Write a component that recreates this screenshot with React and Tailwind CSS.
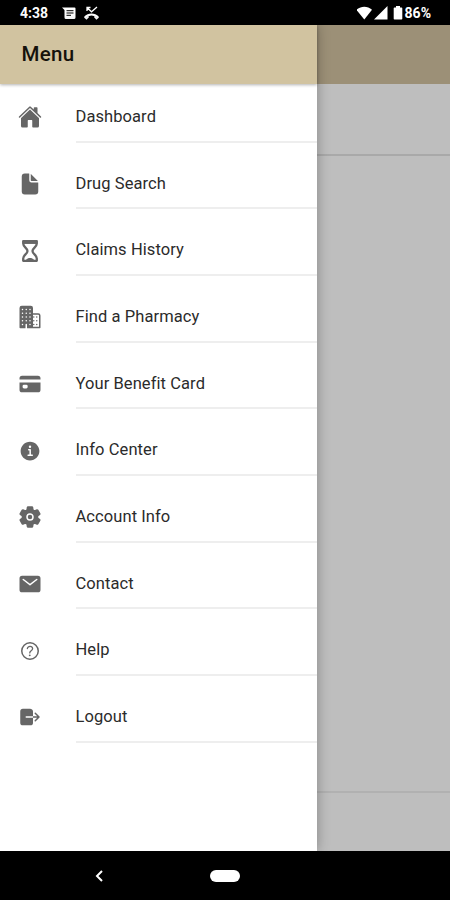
import {
  IoBusiness,
  IoCard,
  IoDocument,
  IoHelpCircleOutline,
  IoHome,
  IoInformationCircle,
  IoLogOut,
  IoMail,
  IoSettings,
} from "react-icons/io5";

function Hourglass({ className }) {
  return (
    <svg className={className} viewBox="0 0 24 24" fill="none" stroke="currentColor" strokeWidth="2.300" strokeLinejoin="round">
      <path d="M5.200 2.200h13.600v2.300c0 3.700-4.300 4.300-4.300 7.500s4.300 3.800 4.300 7.500v2.300H5.200v-2.300c0-3.700 4.300-4.300 4.300-7.500S5.200 8.200 5.200 4.500z" />
      <path d="M5.500 3.800h13" />
      <path d="M8 21c1-1.500 2.500-2 4-2s3 .5 4 2z" fill="currentColor" stroke="none" />
    </svg>
  );
}

const items = [
  { label: "Dashboard", icon: IoHome },
  { label: "Drug Search", icon: IoDocument },
  { label: "Claims History", icon: Hourglass },
  { label: "Find a Pharmacy", icon: IoBusiness },
  { label: "Your Benefit Card", icon: IoCard },
  { label: "Info Center", icon: IoInformationCircle },
  { label: "Account Info", icon: IoSettings },
  { label: "Contact", icon: IoMail },
  { label: "Help", icon: IoHelpCircleOutline },
  { label: "Logout", icon: IoLogOut },
];

function StatusBar() {
  return (
    <header className="flex h-[25px] shrink-0 items-center bg-black pl-5 pr-[19px] pt-px text-[13px] font-bold leading-none text-white">
      <span className="w-[42px] text-[14px]">4:38</span>
      <svg className="h-[13px] w-[14px]" viewBox="0 0 14 13" fill="none">
        <path d="M0 0.5h12.500a1 1 0 0 1 1 1v9a1.500 1.500 0 0 1-1.500 1.500h-8a1.500 1.500 0 0 1-1.500-1.500V3z" fill="white" />
        <path d="M4.500 3.700h7M4.500 6h7M4.500 8.300h4.500" stroke="black" />
      </svg>
      <svg className="ml-[7px] h-[14px] w-[17px]" viewBox="0 0 17 14" fill="none" stroke="white">
        <path d="M4 5V1.500h3.500M4.300 1.800l4.200 4L14 1" strokeWidth="1.300" />
        <path d="M2 11.300c3.500-3.800 9.500-3.800 13 0" strokeWidth="2" />
        <path d="M1.500 11l2 1.600 2-2.200M15.500 11l-2 1.600-2-2.200" strokeWidth="1.600" />
      </svg>
      <svg className="ml-auto h-[14px] w-[47px]" viewBox="0 0 47 14" fill="white">
        <path d="M-.5 3.800C4-.4 10.500-.4 15 3.800L7.300 13.500z" />
        <path d="M30.500 0v13.500H17z" />
        <path d="M39 0h4v1.500h1.500a.8.8 0 0 1 .8.8v10.400a.8.8 0 0 1-.8.8h-7a.8.8 0 0 1-.8-.8V2.300a.8.8 0 0 1 .8-.8H39z" />
      </svg>
      <span className="ml-px text-[14px]">86%</span>
    </header>
  );
}

function MenuItem({ label, icon: Icon }) {
  return (
    <li className="mb-[15.670px] flex h-[51px]">
      <div className="flex w-[75.500px] shrink-0 items-center pl-[17.500px] text-[#666]">
        <Icon className="size-6" />
      </div>
      <span className="flex flex-1 items-center border-b-2 border-[#eee] pt-[2px] text-[16.500px] tracking-[0.080px] text-[#2b2b2b]">
        {label}
      </span>
    </li>
  );
}

export default function App() {
  return (
    <div className="flex h-[900px] w-[450px] flex-col overflow-hidden bg-black font-['Roboto',sans-serif]">
      <StatusBar />
      <div className="flex h-[826px] shrink-0">
        <nav className="z-10 flex w-[317px] shrink-0 flex-col bg-white shadow-[0_0_12px_rgba(0,0,0,0.3)]">
          <h1 className="flex h-[59px] shrink-0 items-center bg-[#d1c3a0] pl-[21.500px] text-[20.500px] font-medium tracking-[0.3px] text-[#15120c] shadow-[0_1px_3px_rgba(0,0,0,0.3)]">
            Menu
          </h1>
          <ul className="pt-[7.800px]">
            {items.map((item) => (
              <MenuItem key={item.label} {...item} />
            ))}
          </ul>
        </nav>
        {/* Dimmed page behind the open drawer */}
        <main className="flex flex-1 flex-col bg-[#bebebe]">
          <div className="h-[59px] bg-[#9c9077]" />
          <div className="h-[72px] border-b-2 border-[#a9a9a9]" />
          <div className="flex-1" />
          <div className="h-[60px] border-t-2 border-[#b1b1b1]" />
        </main>
      </div>
      <footer className="flex flex-1 items-center bg-black">
        <svg className="ml-[95px] h-3 w-2" viewBox="0 0 8 12" fill="none" stroke="white" strokeWidth="2">
          <path d="M7 1L2 6l5 5" />
        </svg>
        <div className="ml-[107px] h-[12px] w-[30px] rounded-full bg-white" />
      </footer>
    </div>
  );
}
